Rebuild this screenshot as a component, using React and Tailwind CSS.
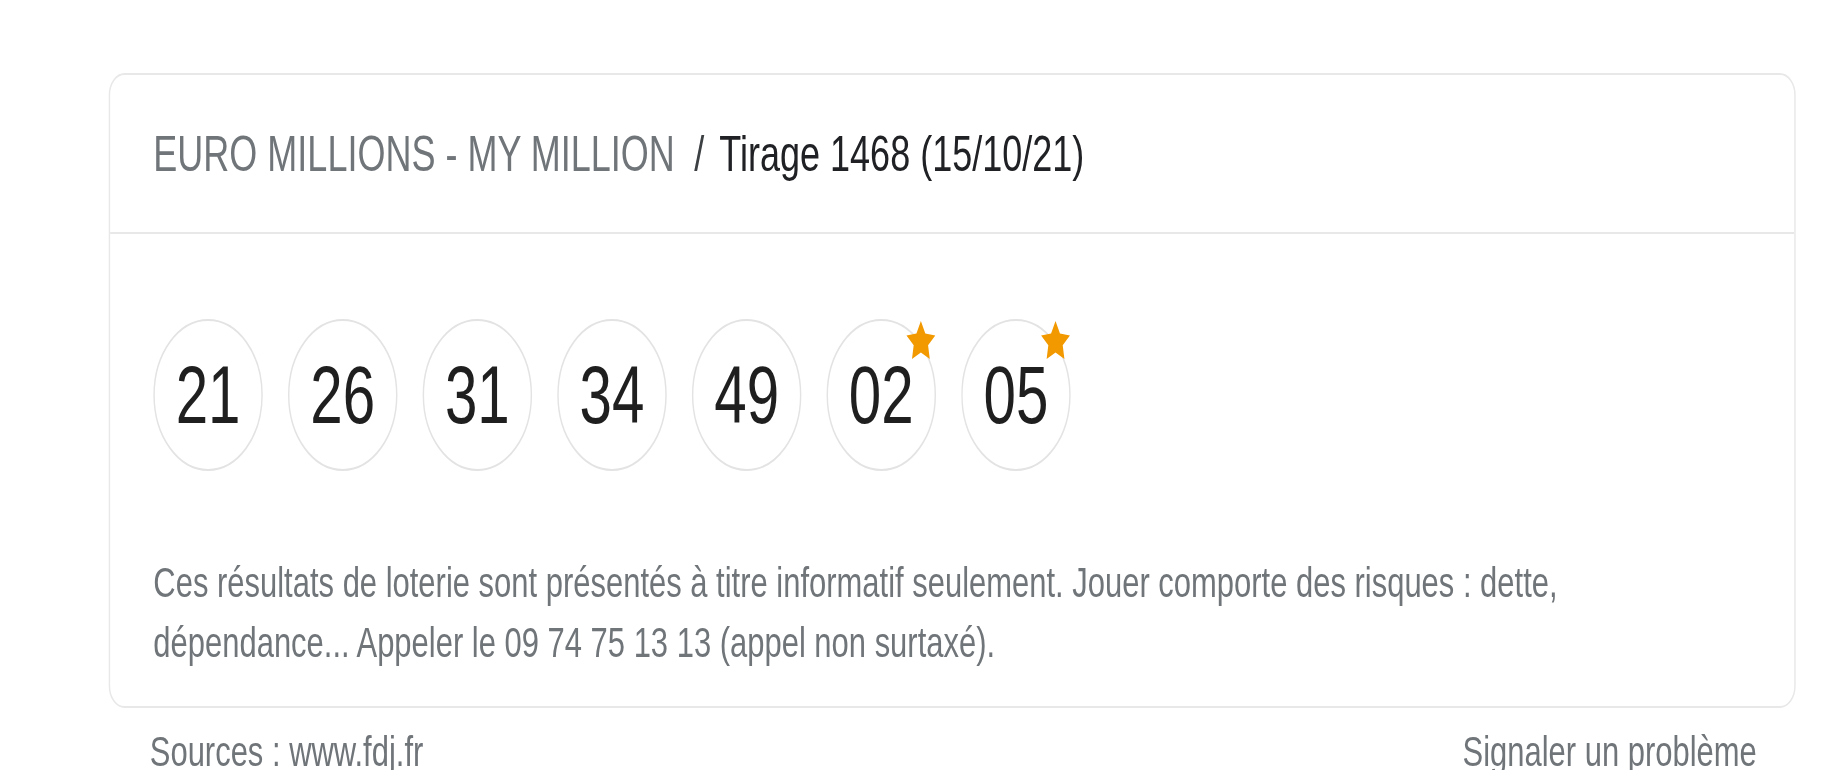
import React from 'react';

const Star = () => (
  <svg viewBox="0 0 24 24" className="absolute -top-[4px] -right-[5px] w-[48px] h-[48px]">
    <path
      d="M12 2l3.09 6.26L22 9.27l-5 4.87 1.18 6.88L12 17.77l-6.18 3.25L7 14.14 2 9.27l6.91-1.01L12 2z"
      fill="#f29900"
    />
  </svg>
);

const Ball = ({ value, star }) => (
  <div className="relative w-[152px] h-[152px] rounded-full border-2 border-[#e3e3e3] bg-white flex items-center justify-center shrink-0">
    <span className="text-[81px] leading-none text-[#1f1f1f]">{value}</span>
    {star && <Star />}
  </div>
);

const App = () => {
  const balls = [
    { value: "21" },
    { value: "26" },
    { value: "31" },
    { value: "34" },
    { value: "49" },
    { value: "02", star: true },
    { value: "05", star: true }
  ];

  return (
    <div className="w-[1836px] h-[770px] overflow-hidden bg-white font-['Liberation_Sans',Arial,sans-serif]">
      {/* the reference is squeezed horizontally, so lay out wide and scale down on x */}
      <div className="w-[2550px] origin-top-left scale-x-[0.72] pt-[73px] pl-[151px] pr-[56px]">
        <div className="rounded-[22px] border-2 border-[#e8e8e8] bg-white">
          <div className="h-[159px] flex items-center px-[60px] border-b-2 border-[#e8e8e8]">
            <h2 className="text-[50px] leading-none whitespace-nowrap">
              <span className="text-[#70757a]">EURO MILLIONS - MY MILLION</span>
              <span className="inline-block ml-[27px] mr-[21px] text-[#3c4043]">/</span>
              <span className="text-[#202124]">Tirage 1468 (15/10/21)</span>
            </h2>
          </div>

          <div className="px-[60px] pt-[85px] pb-[34px]">
            <div className="flex gap-[35px]">
              {balls.map((b, i) => (
                <Ball key={i} value={b.value} star={b.star} />
              ))}
            </div>
            <p className="mt-[81px] text-[43px] leading-[60px] text-[#70757a]">
              Ces résultats de loterie sont présentés à titre informatif seulement. Jouer comporte des risques : dette,
              <br />
              dépendance... Appeler le 09 74 75 13 13 (appel non surtaxé).
            </p>
          </div>
        </div>

        <div className="flex justify-between items-center pl-[57px] pr-[54px] pt-[19px] text-[43px] leading-[48px] text-[#70757a]">
          <span>Sources : www.fdj.fr</span>
          <span>Signaler un problème</span>
        </div>
      </div>
    </div>
  );
};

export default App;
